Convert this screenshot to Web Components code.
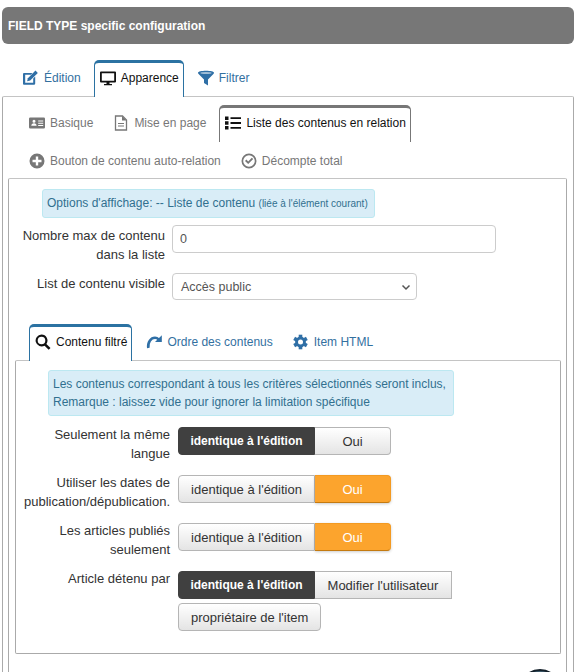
<!DOCTYPE html>
<html lang="fr">
<head>
<meta charset="utf-8">
<title>FIELD TYPE specific configuration</title>
<style>
html, body { margin: 0; padding: 0; background: #fff; height: 672px; overflow: hidden; }
body { font-family: "Liberation Sans", Arial, sans-serif; font-size: 12px; color: #333; position: relative; }
</style>
</head>
<body>
<config-page>
  <panel-header>FIELD TYPE specific configuration</panel-header>

  <tab-nav style="--nav-left: 14px">
    <tab-item icon="edit" tone="blue">Édition</tab-item>
    <tab-item icon="monitor" tone="blue" active>Apparence</tab-item>
    <tab-item icon="filter" tone="blue">Filtrer</tab-item>
  </tab-nav>
  <frame-box style="--pad: 8px 6px 0 5px; --frame-top: 0">
    <tab-nav style="--nav-left: 14px; --nav-top: 0">
      <tab-item icon="idcard" tone="gray">Basique</tab-item>
      <tab-item icon="file" tone="gray">Mise en page</tab-item>
      <tab-item icon="list" tone="gray" active>Liste des contenus en relation</tab-item>
      <tab-item icon="plus" tone="gray" low>Bouton de contenu auto-relation</tab-item>
      <tab-item icon="check" tone="gray" low>Décompte total</tab-item>
    </tab-nav>
    <frame-box style="--pad: 10px 5px 200px 6px; --frame-top: 1px">
      <info-note style="--note-left: 27px"><span>Options d'affichage: -- Liste de contenu <small style="font-size:10px">(liée à l'élément courant)</small></span></info-note>

      <form-row style="--label: 150px; --gap: 7px; --top: 7px; --row: 38px; --label-top: 1px">
        <span slot="label">Nombre max de contenu dans la liste</span>
        <text-input value="0"></text-input>
      </form-row>
      <form-row style="--label: 150px; --gap: 7px; --top: 9px; --label-top: 1px">
        <span slot="label">List de contenu visible</span>
        <select-input value="Accès public"></select-input>
      </form-row>

      <tab-nav style="--nav-left: 14px; --nav-top: 24px">
        <tab-item icon="search" tone="blue" active>Contenu filtré</tab-item>
        <tab-item icon="redo" tone="blue">Ordre des contenus</tab-item>
        <tab-item icon="gear" tone="blue">Item HTML</tab-item>
      </tab-nav>
      <frame-box style="--pad: 9px 0 22px 0; --frame-top: 0">
        <info-note style="--note-left: 32px; --lh: 18px; --note-pad: 4px 7px 4px 4px">Les contenus correspondant à tous les critères sélectionnés seront inclus,<br>Remarque : laissez vide pour ignorer la limitation spécifique</info-note>

        <form-row style="--label: 154px; --gap: 8px; --top: 11px; --row: 38px; --label-top: -2px">
          <span slot="label">Seulement la même langue</span>
          <toggle-group>
            <toggle-btn state="dark" pos="first">identique à l'édition</toggle-btn>
            <toggle-btn pos="last" wide>Oui</toggle-btn>
          </toggle-group>
        </form-row>
        <form-row style="--label: 154px; --gap: 8px; --top: 10px; --row: 38px; --label-top: -2px">
          <span slot="label">Utiliser les dates de publication/dépublication.</span>
          <toggle-group>
            <toggle-btn pos="first">identique à l'édition</toggle-btn>
            <toggle-btn state="orange" pos="last" wide>Oui</toggle-btn>
          </toggle-group>
        </form-row>
        <form-row style="--label: 154px; --gap: 8px; --top: 10px; --row: 38px; --label-top: -2px">
          <span slot="label">Les articles publiés seulement</span>
          <toggle-group>
            <toggle-btn pos="first">identique à l'édition</toggle-btn>
            <toggle-btn state="orange" pos="last" wide>Oui</toggle-btn>
          </toggle-group>
        </form-row>
        <form-row style="--label: 154px; --gap: 8px; --top: 10px; --label-top: -2px">
          <span slot="label">Article détenu par</span>
          <toggle-group>
            <toggle-btn state="dark" pos="first">identique à l'édition</toggle-btn>
            <toggle-btn pos="mid">Modifier l'utilisateur</toggle-btn>
            <toggle-btn pos="solo">propriétaire de l'item</toggle-btn>
          </toggle-group>
        </form-row>
      </frame-box>
    </frame-box>
  </frame-box>
</config-page>
<round-badge></round-badge>

<script>
const FONT = '"Liberation Sans", Arial, sans-serif'

// icones desenhados a mao, viewBox 16x16
const ICONS = {
  edit: '<g transform="translate(-1 0)"><path fill="currentColor" d="M2 3h8.500L8.800 4.800H3.200v8h8V8.400L13.200 6.500v7a1.200 1.200 0 0 1-1.200 1.200H2a1.200 1.200 0 0 1-1.200-1.200V4.200A1.200 1.200 0 0 1 2 3z"/><path fill="currentColor" d="M13.500.6l2.300 2.300-7.600 7.600-3.100.8.800-3.100z"/></g>',
  monitor: '<path fill="currentColor" fill-rule="evenodd" d="M1 1.500h14a1 1 0 0 1 1 1v9a1 1 0 0 1-1 1H9.500V14H12v1.200H4V14h2.500v-1.500H1a1 1 0 0 1-1-1v-9a1 1 0 0 1 1-1zm.8 1.700v7.500h12.400V3.200z"/>',
  filter: '<path fill="currentColor" d="M0 2.800C0 1.500 3.600.8 8 .8s8 .7 8 2c0 .5-.3.8-.6 1.100L10 9.500V15.500L6 13V9.500L.6 3.900C.3 3.600 0 3.300 0 2.800z"/><ellipse cx="8" cy="2.900" rx="5.600" ry="1" fill="#fff" opacity=".55"/>',
  idcard: '<path fill="currentColor" fill-rule="evenodd" d="M1.200 2.500h13.600A1.200 1.200 0 0 1 16 3.700v8.600a1.200 1.200 0 0 1-1.200 1.200H1.200A1.200 1.200 0 0 1 0 12.300V3.700a1.200 1.200 0 0 1 1.200-1.200zM5 4.800a1.500 1.500 0 1 0 0 3 1.500 1.500 0 0 0 0-3zM2.300 10.800h5.300c0-1.600-1-2.500-2.600-2.500s-2.700.9-2.700 2.500zM9.200 5.500v1h5v-1zm0 2.200v1h5v-1zm0 2.200v1h5v-1z"/>',
  file: '<path fill="none" stroke="currentColor" stroke-width="1.300" d="M2.500 1h7L13.500 5v10h-11z"/><path fill="currentColor" d="M9 1v4.500h4.500zM5 8h6v1H5zm0 2.500h6v1H5z"/>',
  list: '<path fill="currentColor" d="M0 1.500h3.500V5H0zm0 4.800h3.500v3.500H0zm0 4.800h3.500v3.500H0zM5.500 2.300H16v1.800H5.500zm0 4.800H16v1.800H5.500zm0 4.800H16v1.800H5.500z"/>',
  plus: '<path fill="currentColor" fill-rule="evenodd" d="M8 .5a7.500 7.500 0 1 1 0 15 7.500 7.500 0 0 1 0-15zM6.800 3.500v3.300H3.500v2.400h3.300v3.300h2.400V9.200h3.300V6.800H9.200V3.500z"/>',
  check: '<path fill="currentColor" fill-rule="evenodd" d="M8 .5a7.500 7.500 0 1 1 0 15 7.500 7.500 0 0 1 0-15zm0 1.700a5.800 5.800 0 1 0 0 11.600A5.800 5.800 0 0 0 8 2.200z"/><path fill="currentColor" d="M4 8l1.400-1.400 1.800 1.800 3.600-3.700L12.200 6.100l-5 5z"/>',
  search: '<path fill="currentColor" fill-rule="evenodd" d="M6.500.5a6 6 0 0 1 4.900 9.400l4.100 4.100-1.800 1.800-4.100-4.100A6 6 0 1 1 6.500.5zm0 2.200a3.800 3.800 0 1 0 0 7.600 3.800 3.800 0 0 0 0-7.600z"/>',
  redo: '<path fill="none" stroke="currentColor" stroke-width="2.600" d="M2.300 14C1.500 8 5 3.800 9 3.800c1.500 0 2.600.5 3.600 1.500"/><path fill="currentColor" d="M15.800 1.200V8H9z"/>',
  gear: '<g transform="translate(7.500 8)" fill="currentColor"><circle r="5.400"/><rect x="-1.800" y="-7.300" width="3.600" height="14.600"/><rect x="-1.800" y="-7.300" width="3.600" height="14.600" transform="rotate(60)"/><rect x="-1.800" y="-7.300" width="3.600" height="14.600" transform="rotate(120)"/><circle r="2.500" fill="#fff"/></g>'
}

class ConfigPage extends HTMLElement {
  constructor() {
    super()
    this.attachShadow({ mode: 'open' })
    this.shadowRoot.innerHTML = `
      <style>
        :host { display: block; height: 672px; box-sizing: border-box; overflow: hidden; padding: 7px 6px 0 2px; font-family: ${FONT}; }
      </style>
      <slot></slot>`
  }
}

class PanelHeader extends HTMLElement {
  constructor() {
    super()
    this.attachShadow({ mode: 'open' })
    this.shadowRoot.innerHTML = `
      <style>
        :host {
          display: flex; align-items: center; height: 37px; padding-left: 6px; box-sizing: border-box;
          background: #777; border-radius: 6px; color: #fff; font-weight: bold; font-size: 12px;
        }
      </style>
      <slot></slot>`
  }
}

class TabNav extends HTMLElement {
  constructor() {
    super()
    this.attachShadow({ mode: 'open' })
    this.shadowRoot.innerHTML = `
      <style>
        :host {
          display: flex; flex-wrap: wrap; column-gap: 7px;
          padding-left: var(--nav-left, 0); margin-top: var(--nav-top, 16px);
        }
      </style>
      <slot></slot>`
  }
}

class TabItem extends HTMLElement {
  constructor() {
    super()
    this.attachShadow({ mode: 'open' })
    const icon = ICONS[this.getAttribute('icon')] || ''
    this.shadowRoot.innerHTML = `
      <style>
        :host {
          display: inline-flex; align-items: center; gap: 5px; height: 36px; box-sizing: border-box;
          padding: 0 5px 0 6px; font-size: 12px; border: 1px solid transparent; border-width: 3px 1px 0 1px;
          border-radius: 5px 5px 0 0; position: relative; white-space: nowrap;
        }
        :host([tone="blue"]) { color: #33709f; --line: #2b72a2; }
        :host([tone="gray"]) { color: #777; --line: #777; }
        :host([active]) {
          color: #111; background: #fff; border-color: var(--line); z-index: 1; margin-bottom: -1px; height: 37px;
          padding: 0 4px 4px 5px;
        }
        :host(:not([active])) { padding-bottom: 3px; }
        :host([low]) { padding-bottom: 0 !important; }
        svg { width: 16px; height: 16px; flex: none; }
        :host([tone="blue"]) svg { color: #2f6fa6; }
        :host([active]) svg, :host([tone="blue"][active]) svg { color: #111; }
      </style>
      <svg viewBox="0 0 16 16">${icon}</svg><span><slot></slot></span>`
  }
}

class FrameBox extends HTMLElement {
  constructor() {
    super()
    this.attachShadow({ mode: 'open' })
    this.shadowRoot.innerHTML = `
      <style>
        :host {
          display: block; box-sizing: border-box; background: #fff; border: 1px solid #aaa; border-top-color: #c4c4c4;
          border-radius: 2px; padding: var(--pad, 0); margin-top: var(--frame-top, 0);
        }
      </style>
      <slot></slot>`
  }
}

class InfoNote extends HTMLElement {
  constructor() {
    super()
    this.attachShadow({ mode: 'open' })
    this.shadowRoot.innerHTML = `
      <style>
        :host {
          display: table; box-sizing: border-box; margin-left: var(--note-left, 0); padding: var(--note-pad, 5px 6px 5px 4px); font-size: 12px;
          line-height: var(--lh, 17px); background: #d9edf7; border: 1px solid #bce8f1; border-radius: 3px; color: #31708f;
        }
      </style>
      <slot></slot>`
  }
}

class FormRow extends HTMLElement {
  constructor() {
    super()
    this.attachShadow({ mode: 'open' })
    this.shadowRoot.innerHTML = `
      <style>
        :host { display: flex; align-items: flex-start; gap: var(--gap, 6px); margin-top: var(--top, 0); min-height: var(--row, 0); }
        .label {
          flex: none; width: var(--label, 150px); margin-top: var(--label-top, 0); text-align: right;
          font-size: 13px; line-height: 19px; color: #333;
        }
        .body { flex: 1; min-width: 0; }
      </style>
      <div class="label"><slot name="label"></slot></div>
      <div class="body"><slot></slot></div>`
  }
}

class TextInput extends HTMLElement {
  constructor() {
    super()
    this.attachShadow({ mode: 'open' })
    this.shadowRoot.innerHTML = `
      <style>
        :host { display: block; width: 324px; }
        input {
          display: block; width: 100%; height: 28px; box-sizing: border-box; padding: 0 7px; background: #fff;
          border: 1px solid #ccc; border-radius: 4px; color: #555; font: 12.5px ${FONT};
        }
      </style>
      <input type="text" value="${this.getAttribute('value') || ''}">`
  }
}

class SelectInput extends HTMLElement {
  constructor() {
    super()
    this.attachShadow({ mode: 'open' })
    this.shadowRoot.innerHTML = `
      <style>
        :host {
          display: flex; align-items: center; justify-content: space-between; width: 245px; height: 27px; box-sizing: border-box;
          padding: 0 5px 0 8px; background: #fff; border: 1px solid #ccc; border-radius: 4px; color: #555; font-size: 12.5px;
        }
        svg { width: 10px; height: 10px; }
      </style>
      <span>${this.getAttribute('value') || ''}</span>
      <svg viewBox="0 0 10 10"><path d="M1.500 3.500 5 7l3.500-3.500" fill="none" stroke="#555" stroke-width="1.500"/></svg>`
  }
}

class ToggleGroup extends HTMLElement {
  constructor() {
    super()
    this.attachShadow({ mode: 'open' })
    this.shadowRoot.innerHTML = `
      <style>
        :host { display: flex; flex-wrap: wrap; row-gap: 4px; }
      </style>
      <slot></slot>`
  }
}

class ToggleBtn extends HTMLElement {
  constructor() {
    super()
    this.attachShadow({ mode: 'open' })
    this.shadowRoot.innerHTML = `
      <style>
        :host {
          display: inline-flex; align-items: center; justify-content: center; height: 28px; box-sizing: border-box; padding: 0 12px;
          background: linear-gradient(#fff, #e4e4e4); border: 1px solid #b5b5b5; color: #333; font-size: 13px; white-space: nowrap;
        }
        :host([wide]) { width: 76px; padding: 0; }
        :host([pos="first"]) { width: 137px; padding: 0; border-radius: 4px 0 0 4px; }
        :host([pos="last"]) { border-radius: 0 4px 4px 0; border-left: 0; }
        :host([pos="mid"]) { width: 137px; padding: 0; border-left: 0; }
        :host([pos="solo"]) { border-radius: 4px; }
        :host([state="dark"]) { background: #404040; border-color: #404040; color: #fff; font-weight: bold; font-size: 12px; }
        :host([state="orange"]) {
          background: #fca42d; border-color: #f39a22; border-bottom-color: #c47a10; color: #fff;
          box-shadow: 0 1px 3px rgba(0, 0, 0, .2);
        }
      </style>
      <slot></slot>`
  }
}

class RoundBadge extends HTMLElement {
  constructor() {
    super()
    this.attachShadow({ mode: 'open' })
    this.shadowRoot.innerHTML = `
      <style>
        :host {
          position: absolute; left: 519px; top: 669px; width: 42px; height: 3px; overflow: hidden; display: block;
        }
        div { width: 42px; height: 42px; box-sizing: border-box; border-radius: 50%; background: #3d5a6c; border: 2px solid #14202a; }
      </style>
      <div></div>`
  }
}

customElements.define('config-page', ConfigPage)
customElements.define('panel-header', PanelHeader)
customElements.define('tab-nav', TabNav)
customElements.define('tab-item', TabItem)
customElements.define('frame-box', FrameBox)
customElements.define('info-note', InfoNote)
customElements.define('form-row', FormRow)
customElements.define('text-input', TextInput)
customElements.define('select-input', SelectInput)
customElements.define('toggle-group', ToggleGroup)
customElements.define('toggle-btn', ToggleBtn)
customElements.define('round-badge', RoundBadge)
</script>
</body>
</html>
